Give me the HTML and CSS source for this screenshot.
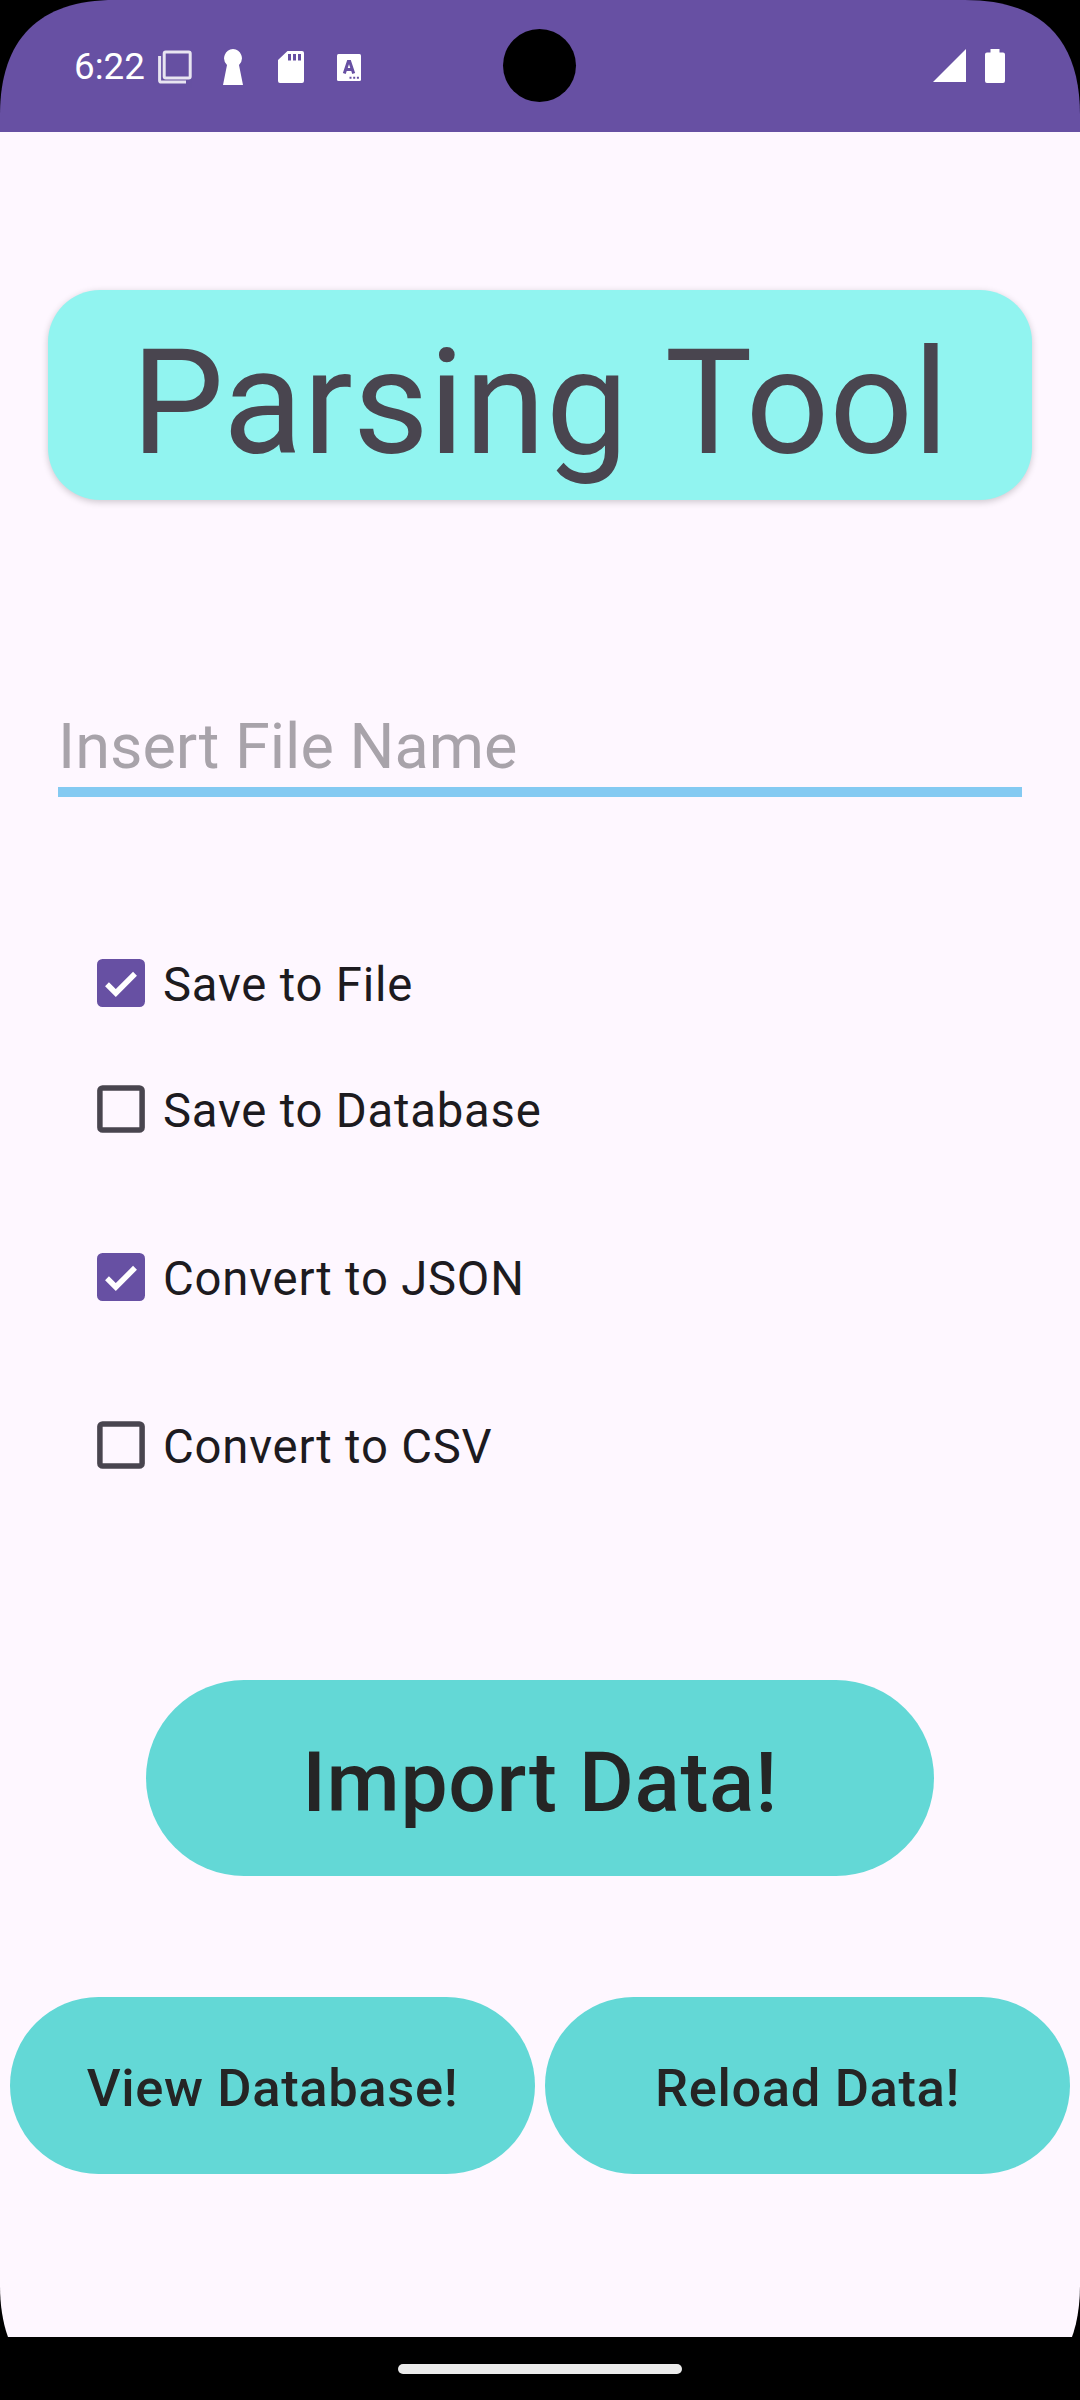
FILE: index.html
```html
<!DOCTYPE html>
<html lang="en">
<head>
<meta charset="utf-8">
<title>Parsing Tool</title>
<link rel="stylesheet" href="styles.css">
</head>
<body>
<div class="screen">
  <header class="status-bar">
    <span class="clock">6:22</span>
    <div class="notifications">
      <svg class="icon-windows" width="34" height="34" viewBox="0 0 34 34"><rect x="6.2" y="1.9" width="26" height="26" rx="1.5"/><path d="M1.6 6v24.400q0 1.600 1.600 1.600H28"/></svg>
      <svg class="icon-solid" width="20" height="36" viewBox="0 0 20 36"><path d="M10 0a9.300 9.300 0 0 1 6 16L20 36H0L4 16A9.300 9.300 0 0 1 10 0z"/></svg>
      <svg class="icon-solid icon-card" width="26" height="32" viewBox="0 0 26 32"><path fill-rule="evenodd" d="M9.500 0H24q2 0 2 2v28q0 2-2 2H2q-2 0-2-2V9zM10 3v6.500h3V3zm5 0v6.500h3V3zm5 0v6.500h3V3z"/></svg>
      <svg class="icon-solid icon-letter" width="24" height="27" viewBox="0 0 24 27"><rect width="24" height="27" rx="1.5"/><path class="glyph" d="M7.300 19.500L11.300 7.500h1.400L16.700 19.500M8.800 15.500h6.400"/><path class="dots" d="M12.500 22.700h2v2h-2zm3.700 0h2v2h-2zm3.700 0h2v2h-2z"/></svg>
    </div>
    <div class="system-icons">
      <svg class="icon-solid" width="33" height="33" viewBox="0 0 33 33"><path d="M33 0v33H0z"/></svg>
      <svg class="icon-solid" width="20" height="34" viewBox="0 0 20 34"><path d="M5.500 0h9v3.500H18q2 0 2 2V32q0 2-2 2H2q-2 0-2-2V5.500q0-2 2-2h3.500z"/></svg>
    </div>
    <div class="camera"></div>
  </header>
  <main class="content">
    <h1 class="title-card">Parsing Tool</h1>
    <input class="file-name" type="text" placeholder="Insert File Name" aria-label="File name">
    <div class="options">
      <label class="option"><svg class="box" viewBox="0 0 48 48"><rect class="fill" width="48" height="48" rx="5.500"/><path class="tick" d="M10 25.300l8.800 8.700L38 14.800"/></svg><span>Save to File</span></label>
      <label class="option"><svg class="box" viewBox="0 0 48 48"><rect class="outline" x="2.900" y="2.900" width="42.200" height="42.200" rx="2.700"/></svg><span>Save to Database</span></label>
      <label class="option option-spaced format-start"><svg class="box" viewBox="0 0 48 48"><rect class="fill" width="48" height="48" rx="5.500"/><path class="tick" d="M10 25.300l8.800 8.700L38 14.800"/></svg><span>Convert to JSON</span></label>
      <label class="option option-spaced"><svg class="box" viewBox="0 0 48 48"><rect class="outline" x="2.900" y="2.900" width="42.200" height="42.200" rx="2.700"/></svg><span>Convert to CSV</span></label>
    </div>
    <button class="button button-large">Import Data!</button>
    <div class="button-row">
      <button class="button">View Database!</button>
      <button class="button">Reload Data!</button>
    </div>
  </main>
  <footer class="nav-bar"><div class="nav-handle"></div></footer>
</div>
</body>
</html>
```
FILE: styles.css
```css
* { box-sizing: border-box; }
body {
  margin: 0;
  background: #000;
  font-family: Roboto, "Liberation Sans", sans-serif;
}
/* The display has slightly squared-off corner curves. */
.screen {
  width: 1080px;
  height: 2400px;
  display: flex;
  flex-direction: column;
  overflow: hidden;
  clip-path: path("M0 115C0 39 39 0 115 0H965C1041 0 1080 39 1080 115V2285C1080 2361 1041 2400 965 2400H115C39 2400 0 2361 0 2285Z");
}
.status-bar {
  position: relative;
  flex: none;
  height: 132px;
  padding: 0 75px 0 74px;
  display: flex;
  align-items: center;
  background: #6750a3;
  color: #fff;
}
.clock { font-size: 36.75px; line-height: 44px; width: 84px; padding-top: 1px; }
.notifications { display: flex; align-items: center; gap: 31px; margin-top: 2px; }
.icon-card { margin-left: 4px; }
.icon-letter { margin-left: 2px; }
.system-icons { display: flex; align-items: flex-start; gap: 19px; margin-left: auto; }
.camera {
  position: absolute;
  left: 503px;
  top: 29px;
  width: 73px;
  height: 73px;
  border-radius: 50%;
  background: #000;
}
svg { display: block; flex: none; }
.icon-solid { fill: #fff; }
.icon-windows { fill: none; stroke: #fff; stroke-width: 3; opacity: .85; }
.glyph { fill: none; stroke: #6750a3; stroke-width: 3; }
.dots { fill: #6750a3; }
.content {
  height: 2205px;
  flex: none;
  display: flex;
  flex-direction: column;
  align-items: center;
  background: #fef7ff;
}
.title-card {
  margin: 158px 0 0;
  width: 984px;
  height: 210px;
  border-radius: 52px;
  background: #91f4f0;
  box-shadow: 0 2px 7px rgba(0, 0, 0, .2);
  color: #49454f;
  font-size: 147px;
  font-weight: 400;
  line-height: 227px;
  word-spacing: 3px;
  text-align: center;
}
.file-name {
  margin: 196px 0 0;
  width: 964px;
  height: 101px;
  padding: 10px 0 0;
  border: 0;
  border-bottom: 10px solid #84caf2;
  border-radius: 0;
  outline: 0;
  background: transparent;
  font: 400 63px Roboto, "Liberation Sans", sans-serif;
}
.file-name::placeholder { color: #a8a3aa; opacity: 1; }
.options { align-self: flex-start; margin: 123px 0 0 97px; }
.option {
  height: 126px;
  display: flex;
  align-items: center;
  gap: 18px;
  color: #1d1b20;
  font-size: 47.25px;
  letter-spacing: .79px;
}
.option span { padding-top: 3px; }
.option-spaced { height: 168px; }
.format-start { margin-top: 21px; }
.box { width: 48px; height: 48px; }
.fill { fill: #6750a3; }
.tick { fill: none; stroke: #fff; stroke-width: 5.500px; }
.outline { fill: none; stroke: #49454f; stroke-width: 5.500px; }
.button {
  width: 525px;
  height: 177px;
  padding: 4px 0 0;
  border: 0;
  border-radius: 98px;
  background: #63d8d6;
  color: #252525;
  font: 500 52.5px Roboto, "Liberation Sans", sans-serif;
  letter-spacing: .63px;
}
.button-large { width: 788px; height: 196px; margin-top: 151px; padding-top: 8px; font-size: 84px; }
.button-row { display: flex; gap: 10px; margin-top: 121px; }
.nav-bar { flex: 1; display: flex; justify-content: center; background: #000; }
.nav-handle { width: 284px; height: 10px; margin-top: 27px; border-radius: 5px; background: #ebebeb; }
```
